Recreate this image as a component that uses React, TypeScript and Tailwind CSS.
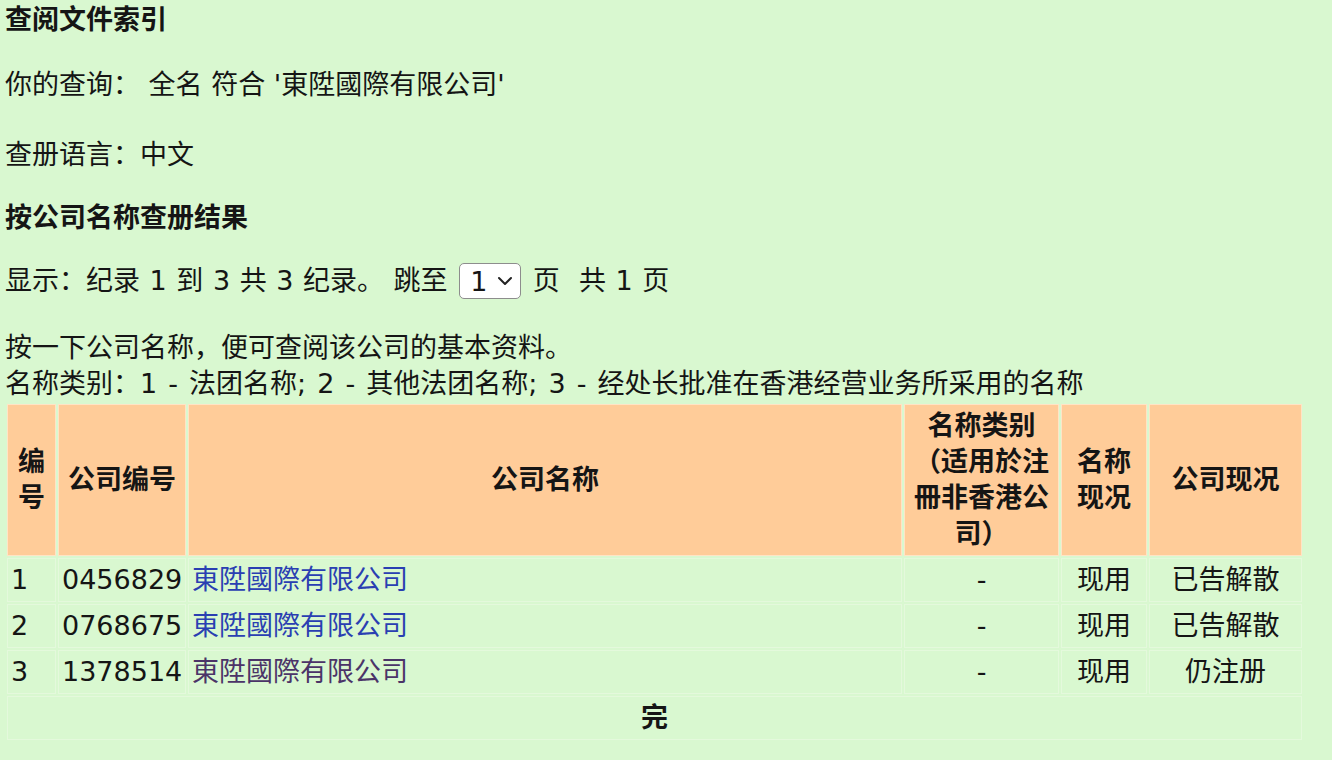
import { Fragment } from "react";

type Row = {
  no: string;
  companyNo: string;
  name: string;
  visited: boolean;
  category: string;
  nameStatus: string;
  status: string;
};

const ROWS: Row[] = [
  { no: "1", companyNo: "0456829", name: "東陞國際有限公司", visited: false, category: "-", nameStatus: "现用", status: "已告解散" },
  { no: "2", companyNo: "0768675", name: "東陞國際有限公司", visited: false, category: "-", nameStatus: "现用", status: "已告解散" },
  { no: "3", companyNo: "1378514", name: "東陞國際有限公司", visited: true, category: "-", nameStatus: "现用", status: "仍注册" },
];

const FONT = { fontFamily: '"DejaVu Sans", "Noto Sans CJK SC", sans-serif' };

function PageSelect() {
  return (
    <span className="mx-[2px] inline-flex h-[36px] w-[62px] items-center justify-between rounded-[5px] border border-[#8d8d8d] bg-white pl-[10px] pr-[7px] align-middle leading-none">
      <span>1</span>
      <svg width="16" height="10" viewBox="0 0 16 10" fill="none">
        <path d="M2 2l6 6 6-6" stroke="#222" strokeWidth="2" strokeLinecap="round" strokeLinejoin="round" />
      </svg>
    </span>
  );
}

const th = "border border-[#ffe4c6] bg-[#ffcc99] px-[3px] py-[3px] text-center align-middle font-bold";
const td = "border border-[#e4f9dc] px-[3px] py-[3px]";

export default function App() {
  return (
    <div className="min-h-[760px] bg-[#d9f8d0] pl-[5px] text-[27px] leading-[36px] text-[#151515]" style={FONT}>
      <h1 className="pt-[2px] font-bold">查阅文件索引</h1>
      <p className="mt-[29px]">你的查询： 全名 符合 '東陞國際有限公司'</p>
      <p className="mt-[34px]">查册语言：中文</p>
      <h2 className="mt-[27px] font-bold">按公司名称查册结果</h2>
      <p className="mt-[27px] flex items-center whitespace-pre [word-spacing:1px]">
        显示：纪录 1 到 3 共 3 纪录。 跳至 <PageSelect /> 页  共 1 页
      </p>
      <p className="mt-[31px]">按一下公司名称，便可查阅该公司的基本资料。</p>
      <p className="[word-spacing:2.5px]">名称类别：1 - 法团名称; 2 - 其他法团名称; 3 - 经处长批准在香港经营业务所采用的名称</p>

      <table className="w-[1299px] table-fixed border-separate border-spacing-[2px]">
        <colgroup>
          <col className="w-[49px]" />
          <col className="w-[128px]" />
          <col />
          <col className="w-[155px]" />
          <col className="w-[86px]" />
          <col className="w-[153px]" />
        </colgroup>
        <thead>
          <tr>
            <th className={th}>
              编<br />号
            </th>
            <th className={th}>公司编号</th>
            <th className={th}>公司名称</th>
            <th className={th}>
              名称类别
              <br />（适用於注
              <br />冊非香港公
              <br />司）
            </th>
            <th className={th}>
              名称
              <br />现况
            </th>
            <th className={th}>公司现况</th>
          </tr>
        </thead>
        <tbody>
          {ROWS.map((row) => (
            <Fragment key={row.companyNo}>
              <tr>
                <td className={td}>{row.no}</td>
                <td className={td}>{row.companyNo}</td>
                <td className={td}>
                  <a href="#" className={row.visited ? "text-[#4b3468]" : "text-[#2a3fb2]"}>
                    {row.name}
                  </a>
                </td>
                <td className={`${td} text-center`}>{row.category}</td>
                <td className={`${td} text-center`}>{row.nameStatus}</td>
                <td className={`${td} text-center`}>{row.status}</td>
              </tr>
            </Fragment>
          ))}
          <tr>
            <td colSpan={6} className={`${td} text-center font-bold`}>
              完
            </td>
          </tr>
        </tbody>
      </table>
    </div>
  );
}
